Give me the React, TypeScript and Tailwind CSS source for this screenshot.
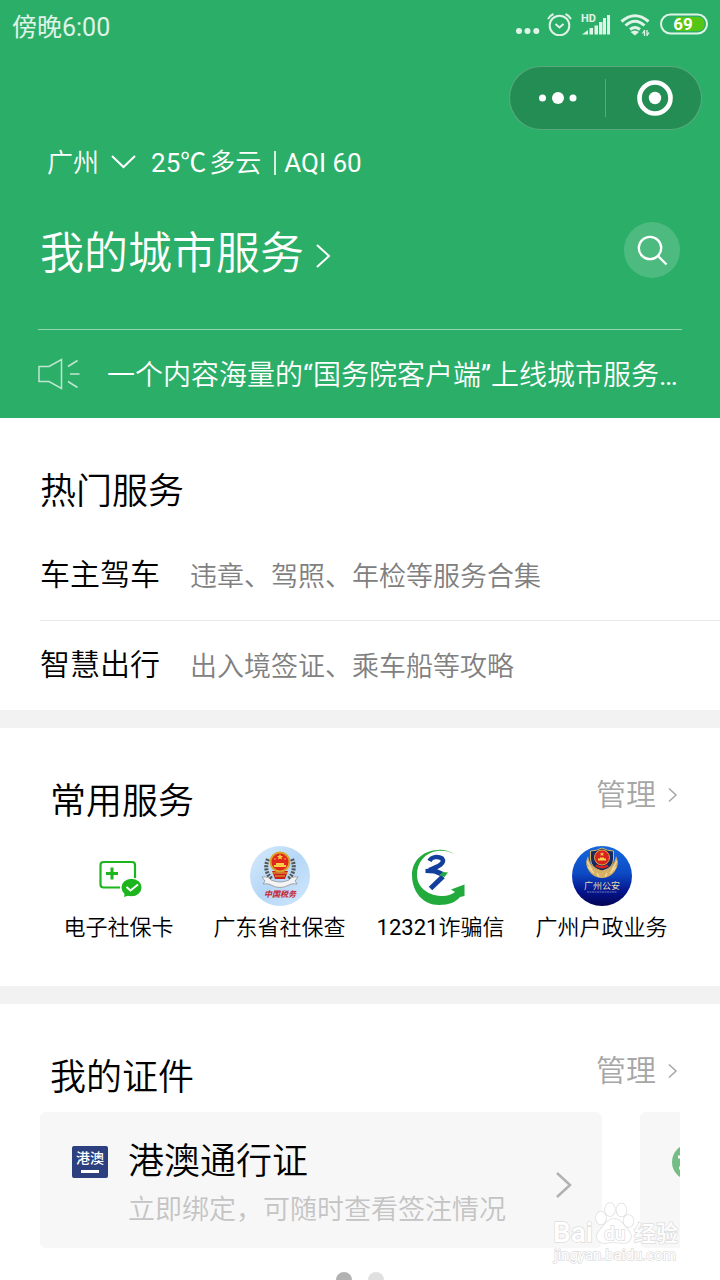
import React from "react";

const services = [
  { code: "", label: "电子社保卡", icon: <CardIcon /> },
  { code: "", label: "广东省社保查", icon: <TaxIcon /> },
  { code: "12321", label: "诈骗信", icon: <ReportIcon /> },
  { code: "", label: "广州户政业务", icon: <PoliceIcon /> },
];

export default function App() {
  return (
    <div className="relative w-full overflow-hidden bg-white font-[Roboto,'Noto_Sans_CJK_SC',sans-serif] font-[350] text-black">
      <header className="bg-[#2bae67] text-white">
        <StatusBar />
        <div className="mt-[18px] flex justify-end pr-[18px]">
          <Capsule />
        </div>
        <div className="px-[38px]">
          <div className="mt-[17px] flex h-8 items-center pl-[9px] text-[26px] leading-8">
            <button className="flex items-center">
              广州
              <svg className="ml-[10px] h-4 w-7" viewBox="0 0 28 16" fill="none" stroke="currentColor" strokeWidth="2">
                <path d="M3 1l11.500 11L26 1" />
              </svg>
            </button>
            <span className="ml-[14px] font-normal">25℃</span>
            <span className="ml-[3px]">多云</span>
            <span className="ml-[13px] h-6 w-0.5 bg-white/80" />
            <span className="ml-2 font-normal">AQI 60</span>
          </div>
          <div className="mt-[43px] flex h-14 items-center justify-between pl-0.5">
            <h1>
              <a href="#city" className="flex items-center pt-2 text-[44px] leading-[56px]">
                我的城市服务
                <svg className="mt-1 ml-[11px] h-7 w-4" viewBox="0 0 16 28" fill="none" stroke="currentColor" strokeWidth="2">
                  <path d="M2 3l12 11L2 25" />
                </svg>
              </a>
            </h1>
            <button aria-label="搜索" className="mr-0.5 flex size-14 items-center justify-center rounded-full bg-white/16">
              <svg className="size-8" viewBox="0 0 32 32" fill="none" stroke="currentColor" strokeWidth="2.300">
                <circle cx="14" cy="14" r="11.200" />
                <path d="M22 22l8.500 8.500" />
              </svg>
            </button>
          </div>
          <a href="#notice" className="mt-[51px] flex h-[89px] items-center border-t border-white/50">
            <svg className="h-8 w-[42px] shrink-0 opacity-70" viewBox="0 0 42 32" fill="none" stroke="currentColor" strokeWidth="1.500">
              <path d="M1 8.500h10L23.500 1.500v29L11 23.500H1z" />
              <path d="M30 8.500l9.500-6M32 16h9.500M30 23.500l9.500 6" />
            </svg>
            <span className="mt-1 ml-[27px] truncate text-[28px] leading-10">
              一个内容海量的<span className="font-normal">“</span>国务院客户端<span className="font-normal">”</span>上线城市服务<span className="font-normal">…</span>
            </span>
          </a>
        </div>
      </header>

      <section className="pt-[42px] pl-10">
        <h2 className="mb-1.5 text-[36px] leading-[64px]">热门服务</h2>
        <HotRow title="车主驾车" desc="违章、驾照、年检等服务合集" />
        <div className="-mb-px border-t border-[#e8e8e8]" />
        <HotRow title="智慧出行" desc="出入境签证、乘车船等攻略" />
      </section>

      <div className="h-[18px] bg-[#f2f2f2]" />

      <section className="pt-10 pb-10">
        <SectionHead title="常用服务" />
        <div className="mt-3 grid grid-cols-4 px-[38px]">
          {services.map(({ code, label, icon }) => (
            <button key={label} className="flex flex-col items-center">
              {icon}
              <span className="mt-1 text-[22px] leading-9 whitespace-nowrap">
                {code && <span className="font-normal">{code}</span>}
                {label}
              </span>
            </button>
          ))}
        </div>
      </section>

      <div className="h-[18px] bg-[#f2f2f2]" />

      <section className="pt-10">
        <SectionHead title="我的证件" />
        <div className="mx-10 mt-0.5 flex gap-[38px] overflow-hidden">
          <a href="#permit" className="flex h-[136px] w-[562px] shrink-0 rounded-md bg-[#f7f7f7] pr-[30px] pl-8">
            <span className="mt-[34px] flex h-8 w-9 flex-col items-center rounded-xs bg-[#2c4080] text-white">
              <span className="text-[14px] leading-6 font-medium">港澳</span>
              <span className="h-[3px] w-[18px] bg-white" />
            </span>
            <span className="mt-7 ml-5 flex flex-col">
              <span className="text-[36px] leading-[44px]">港澳通行证</span>
              <span className="mt-1.5 text-[27px] leading-10 text-[#c4c4c4]">立即绑定，可随时查看签注情况</span>
            </span>
            <svg className="mt-[59px] ml-auto h-7 w-4" viewBox="0 0 16 28" fill="none" stroke="#b2b2b2" strokeWidth="2.500">
              <path d="M1 2l13 12L1 26" />
            </svg>
          </a>
          <a href="#other" aria-label="证件" className="h-[136px] w-[562px] shrink-0 rounded-md bg-[#f7f7f7] px-8 pt-8">
            <svg className="size-9" viewBox="0 0 36 36">
              <circle cx="18" cy="18" r="18" fill="#74bd85" />
              <path d="M6 13h24M7 24h22" stroke="#fff" strokeWidth="3" />
            </svg>
          </a>
        </div>
        <div className="mt-6 flex h-2 justify-center gap-4 overflow-hidden">
          <span className="size-4 rounded-full bg-[#b2b2b2]" />
          <span className="size-4 rounded-full bg-[#e0e0e0]" />
        </div>
      </section>

      <Watermark />
    </div>
  );
}

function StatusBar() {
  return (
    <div className="flex h-12 items-center justify-between px-3 text-white/85">
      <span className="mt-2 text-[25px] leading-8 font-normal">傍晚6:00</span>
      <div className="flex items-center gap-[10px]">
        <svg className="h-6 w-5 overflow-visible" viewBox="0 0 20 24" fill="currentColor">
          <circle cx="3" cy="19" r="3" />
          <circle cx="11.500" cy="19" r="3" />
          <circle cx="20.300" cy="19" r="3" />
        </svg>
        <svg className="h-6 w-[26px]" viewBox="0 0 26 24" fill="none" stroke="currentColor" strokeWidth="2">
          <circle cx="13.500" cy="13.500" r="9.800" />
          <path d="M9.500 12l4 3.500 4-3.500M2 7Q4 3.500 7.500 2M25 7Q23 3.500 19.500 2" />
        </svg>
        <svg className="h-6 w-7 overflow-visible" viewBox="0 0 28 24" fill="currentColor">
          <path d="M0 22.500l6-4.500v4.500zM7.500 16h3.500v6.500H7.500zM12.500 13.500H16v9h-3.500zM17 10h3.500v12.500H17zM21 6h3v16.500h-3zM25 3h3v19.500h-3z" />
          <text x="-1" y="9.500" fontSize="11" fontWeight="700">HD</text>
        </svg>
        <svg className="h-6 w-[30px]" viewBox="0 0 30 24" fill="none" stroke="currentColor" strokeWidth="3">
          <path d="M1.500 9.500Q15-2 28.500 9.500M5.500 13.500Q15 5 24.500 13.500M10 17.500Q15 13.500 20 17.500" />
          <path d="M10.500 20Q15 17 19 20L15 23.500z" fill="currentColor" stroke="none" />
          <path d="M24.500 18v6M27 18v6M22.500 21.500l2-3M29 20.500l-2 3" strokeWidth="1.300" />
        </svg>
        <svg className="h-6 w-12" viewBox="0 0 48 24">
          <path d="M16 5h22q6.500 0 6.500 7T38 19H16z" fill="#57c516" />
          <rect x="1" y="2.500" width="46" height="19" rx="9.500" fill="none" stroke="currentColor" strokeWidth="2" />
          <text x="23" y="18" fontSize="17" fontWeight="700" textAnchor="middle" fill="#fff">69</text>
        </svg>
      </div>
    </div>
  );
}

function Capsule() {
  return (
    <div className="flex h-16 w-[193px] items-center rounded-full border border-white/25 bg-[#238d53]">
      <button aria-label="更多" className="flex flex-1 justify-center">
        <svg className="h-4 w-10" viewBox="0 0 40 16" fill="currentColor">
          <circle cx="4.500" cy="8" r="3.500" />
          <circle cx="20" cy="8" r="6" />
          <circle cx="35" cy="8" r="3.500" />
        </svg>
      </button>
      <span className="h-[38px] w-px bg-white/25" />
      <button aria-label="关闭" className="flex flex-1 justify-center">
        <svg className="size-9 overflow-visible" viewBox="0 0 36 36">
          <circle cx="19" cy="18" r="15.500" fill="none" stroke="#fff" strokeWidth="4.600" />
          <circle cx="19" cy="18" r="6.200" fill="#fff" />
        </svg>
      </button>
    </div>
  );
}

function HotRow({ title, desc }: { title: string; desc: string }) {
  return (
    <a href="#hot" className="flex h-[90px] items-center">
      <span className="text-[30px] leading-10">{title}</span>
      <span className="mt-1 ml-[30px] text-[27px] leading-10 text-[#808080]">{desc}</span>
    </a>
  );
}

function SectionHead({ title }: { title: string }) {
  return (
    <div className="flex justify-between pr-[42px] pl-[50px]">
      <h2 className="mt-0.5 text-[36px] leading-[64px]">{title}</h2>
      <button className="flex h-[52px] items-center text-[30px] text-[#a6a6a6]">
        管理
        <svg className="mt-0.5 ml-3 h-4 w-[10px]" viewBox="0 0 10 16" fill="none" stroke="currentColor" strokeWidth="1.500">
          <path d="M1 1.500L8 8l-7 6.500" />
        </svg>
      </button>
    </div>
  );
}

function CardIcon() {
  return (
    <svg className="size-[60px]" viewBox="0 0 60 60">
      <rect x="11.500" y="16" width="34.500" height="25.500" rx="3" fill="none" stroke="#1db51d" strokeWidth="2.200" />
      <path d="M17 27.500h12M23 21.500v12" stroke="#1db51d" strokeWidth="3" />
      <ellipse cx="42.500" cy="41.500" rx="11.500" ry="10" fill="#fff" />
      <ellipse cx="42.500" cy="41.500" rx="10" ry="8.700" fill="#1db51d" />
      <path d="M36 46l-1 5 6-2z" fill="#1db51d" />
      <path d="M37.500 41l4 3.500 7.500-6" fill="none" stroke="#fff" strokeWidth="2" />
    </svg>
  );
}

function TaxIcon() {
  return (
    <svg className="size-[60px]" viewBox="0 0 60 60">
      <defs>
        <linearGradient id="tax" x1="0" y1="0" x2="1" y2="1">
          <stop offset="0" stopColor="#d8ebfc" />
          <stop offset="0.500" stopColor="#b5d7f7" />
          <stop offset="1" stopColor="#d3e8fc" />
        </linearGradient>
      </defs>
      <circle cx="30" cy="30" r="30" fill="url(#tax)" />
      <path d="M18 13Q13 25 22 33M42 13Q47 25 38 33" fill="none" stroke="#555" strokeWidth="4" strokeDasharray="2 1.200" />
      <path d="M12 31q6-1 9 3 9 4 18 0 3-4 9-3l-3 4 2 3q-6-1-8 1-9 5-18 0-2-2-8-1l2-3z" fill="#f4f4f4" stroke="#888" strokeWidth="0.700" />
      <path d="M22 25h16l-3 8H25z" fill="#c81f1b" />
      <circle cx="30" cy="16" r="9.500" fill="#e1281d" stroke="#d9a62d" strokeWidth="2" />
      <path d="M24 21h12v-2h-2v-2h-8v2h-2zM30 8l1 2h2l-1.500 1.500.500 2-2-1-2 1 .500-2L27 10h2z" fill="#f6ce45" />
      <path d="M22 27h16M25 30h10" stroke="#e3b23b" strokeWidth="1.200" />
      <circle cx="25" cy="13" r="0.800" fill="#f6ce45" />
      <circle cx="35" cy="13" r="0.800" fill="#f6ce45" />
      <text x="30" y="51" fontSize="8" fontWeight="700" fontStyle="italic" textAnchor="middle" fill="#c5202a">中国税务</text>
    </svg>
  );
}

function ReportIcon() {
  return (
    <svg className="size-[60px]" viewBox="0 0 60 60">
      <path
        d="M43 8C37 4 31 3.500 27 4 10 5 1 16 1 29c0 17 11 30 27 30 10 0 17-3 21-8l4.500-1V38.500L40 43.500l4 2.500c-4 3-9 4.500-14 4C15 49 6 40 6 29 6 16 14 7 26 5c6-1 12 0 17 3z"
        fill="#23aa3c"
      />
      <path d="M18.500 15C20.500 10.500 27 10 31 12.500 34.500 17 28 20.500 18 24" fill="none" stroke="#123f9c" strokeWidth="4.500" />
      <path d="M14.500 23l9-1 9 4-3.500 4-6-2.500-8.500-.500z" fill="#123f9c" />
      <path d="M32 30.500L19.500 42.500" stroke="#123f9c" strokeWidth="5" />
      <path d="M28.500 29l3.500-3 5 .500-3.500 4.500z" fill="#23aa3c" />
    </svg>
  );
}

function PoliceIcon() {
  return (
    <svg className="size-[60px]" viewBox="0 0 60 60">
      <defs>
        <linearGradient id="police" x1="0" y1="0" x2="0" y2="1">
          <stop offset="0" stopColor="#1468df" />
          <stop offset="0.450" stopColor="#0c4bc4" />
          <stop offset="0.750" stopColor="#05158e" />
          <stop offset="1" stopColor="#020454" />
        </linearGradient>
      </defs>
      <circle cx="30" cy="30" r="30" fill="url(#police)" />
      <path d="M16 10q-4 8 1 15 4 6 12 7h2q8-1 12-7 5-7 1-15-2 13-14 14-12-1-14-14z" fill="#d6b063" />
      <path d="M15 15l5 9M16 21l6 6M45 15l-5 9M44 21l-6 6M25 27l2 4M35 27l-2 4" stroke="#f0dca4" strokeWidth="1.200" />
      <path d="M18.500 5q6 0 11.500-3 5.500 3 11.500 3v8q0 9-11.500 12-11.500-3-11.500-12z" fill="#182862" stroke="#d7b564" />
      <circle cx="30" cy="11.500" r="7.500" fill="#d9231e" stroke="#e1a744" />
      <path d="M26 14.500h8v-2h-2v-1h-4v1h-2zM30 6l.600 1.500h1.600L31 8.500l.500 1.500-1.500-1-1.500 1 .500-1.500-1.200-1h1.600z" fill="#f6d74d" />
      <path d="M24 19.500q6 3.500 12 0" fill="none" stroke="#d9231e" strokeWidth="2.500" />
      <text x="30" y="43" fontSize="9" fontWeight="400" textAnchor="middle" fill="#e4d6ac">广州公安</text>
      <path d="M15 46h30" stroke="#8696bd" strokeWidth="0.800" strokeDasharray="2 0.500" />
    </svg>
  );
}

function Watermark() {
  return (
    <svg className="absolute right-9 bottom-4 h-[62px] w-[132px]" viewBox="0 0 132 62" fill="#fff" stroke="#dedede" strokeWidth="1.500" paintOrder="stroke" aria-hidden="true">
      <ellipse cx="49" cy="16" rx="5" ry="6.500" />
      <ellipse cx="58" cy="7.500" rx="5" ry="6.500" />
      <ellipse cx="69.500" cy="8" rx="5" ry="6.500" />
      <ellipse cx="76.500" cy="19" rx="5" ry="6" />
      <path d="M62 17c7 0 9 6 14 11 6 7 2 13-5 13-6-1-12-1-18 0-7 0-11-6-5-13 5-5 7-11 14-11z" />
      <text x="1" y="40" fontSize="28" fontWeight="500">Bai</text>
      <text x="52" y="38" fontSize="19" fontWeight="500">du</text>
      <text x="82" y="39" fontSize="22" fontWeight="500">经验</text>
      <text x="2" y="58" fontSize="15" fontWeight="400">jingyan.baidu.com</text>
    </svg>
  );
}
